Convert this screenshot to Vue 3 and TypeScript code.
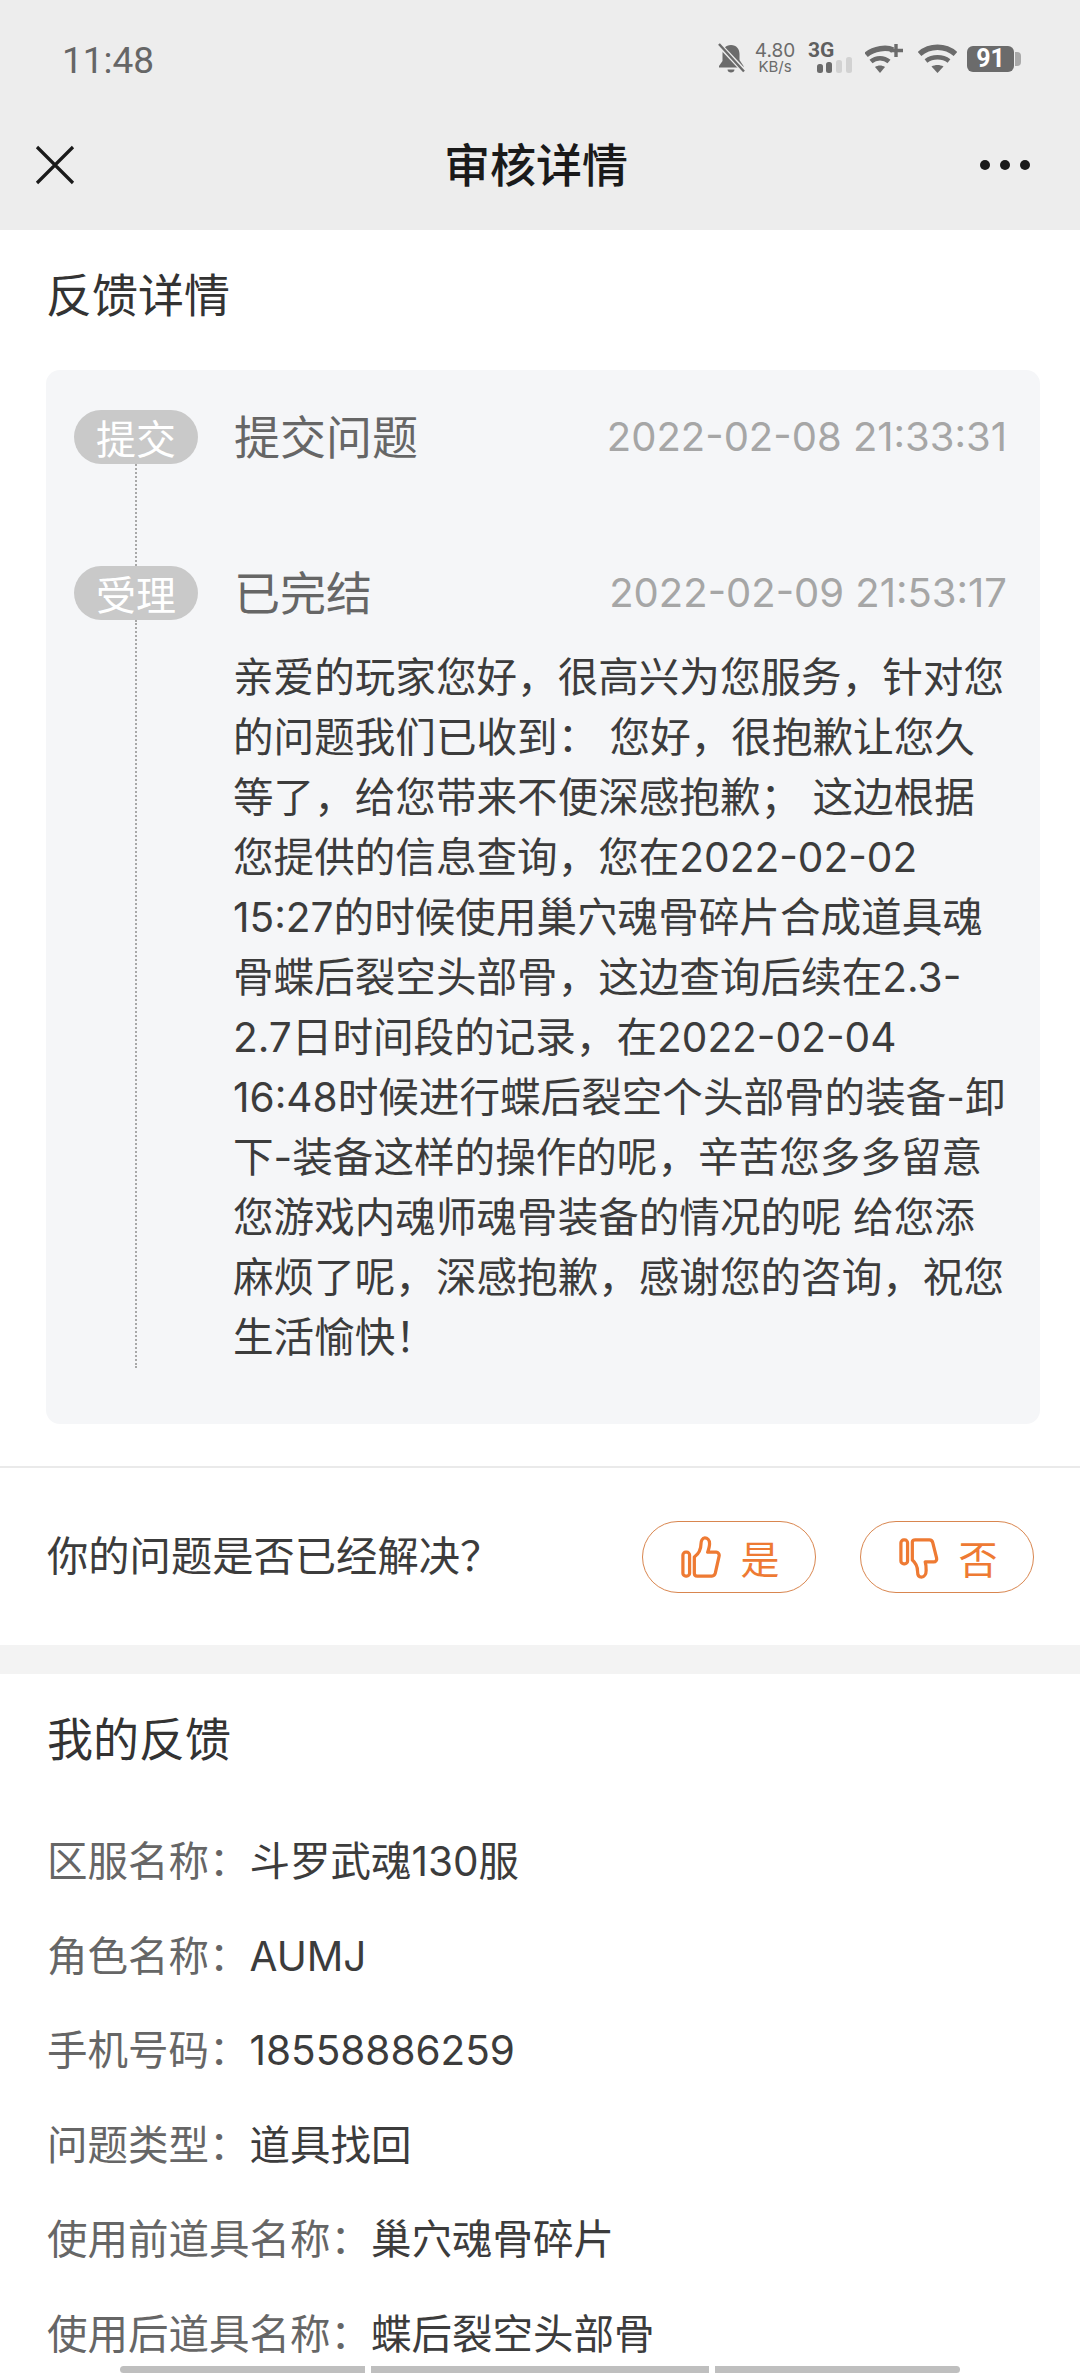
<script setup lang="ts">
const lines = [
  '亲爱的玩家您好，很高兴为您服务，针对您',
  '的问题我们已收到： 您好，很抱歉让您久',
  '等了，给您带来不便深感抱歉； 这边根据',
  '您提供的信息查询，您在2022-02-02',
  '15:27的时候使用巢穴魂骨碎片合成道具魂',
  '骨蝶后裂空头部骨，这边查询后续在2.3-',
  '2.7日时间段的记录，在2022-02-04',
  '16:48时候进行蝶后裂空个头部骨的装备-卸',
  '下-装备这样的操作的呢，辛苦您多多留意',
  '您游戏内魂师魂骨装备的情况的呢 给您添',
  '麻烦了呢，深感抱歉，感谢您的咨询，祝您',
  '生活愉快！',
]

const fields = [
  { label: '区服名称：', value: '斗罗武魂130服' },
  { label: '角色名称：', value: 'AUMJ' },
  { label: '手机号码：', value: '18558886259' },
  { label: '问题类型：', value: '道具找回' },
  { label: '使用前道具名称：', value: '巢穴魂骨碎片' },
  { label: '使用后道具名称：', value: '蝶后裂空头部骨' },
]
</script>

<template>
  <div class="page">
    <header class="top">
      <div class="status">
        <span class="clock">11:48</span>
        <div class="status-icons">
          <svg class="bell" width="29" height="30" viewBox="0 0 29 30">
            <path d="M14 2c5.500 0 8.500 4 8.500 9v6l4 6v1.500H2V23l3.500-5v-7C5.500 6 8.500 2 14 2z M10.500 26.500h7c0 2-1.500 3-3.500 3s-3.500-1-3.500-3z" fill="#6b6b6b" />
            <path d="M1 0.500L28 29" stroke="#ededed" stroke-width="5" />
            <path d="M2 1L27 28.500" stroke="#6b6b6b" stroke-width="2.400" />
          </svg>
          <div class="speed"><span>4.80</span><span class="unit">KB/s</span></div>
          <div class="net">
            <span class="g3">3G</span>
            <svg class="bars" width="36" height="16" viewBox="0 0 36 16">
              <rect x="0" y="7" width="6" height="9" rx="2.500" fill="#6b6b6b" />
              <rect x="9" y="5" width="6" height="11" rx="2.500" fill="#6b6b6b" />
              <rect x="19" y="3" width="6" height="13" rx="2.500" fill="#d2d2d2" />
              <rect x="29" y="0" width="6" height="16" rx="2.500" fill="#d2d2d2" />
            </svg>
          </div>
          <svg class="wifi-plus" width="38" height="29" viewBox="0 0 38 29">
            <path d="M1 11C9 4 22 3 28 6" fill="none" stroke="#6b6b6b" stroke-width="5.500" />
            <path d="M6 17.500c5-4.500 13-4.500 18 0" fill="none" stroke="#6b6b6b" stroke-width="4.500" />
            <path d="M15 29l-5-6c3-2 7-2 10 0z" fill="#6b6b6b" />
            <path d="M31 0v13M25 6.500h13" stroke="#6b6b6b" stroke-width="3.400" />
          </svg>
          <svg class="wifi" width="39" height="29" viewBox="0 0 39 29">
            <path d="M1.500 10c10-9 26-9 36 0" fill="none" stroke="#6b6b6b" stroke-width="5.500" />
            <path d="M8 17c6.500-5 16.500-5 23 0" fill="none" stroke="#6b6b6b" stroke-width="4.500" />
            <path d="M19.500 29l-6-6.500c3.500-2 8.500-2 12 0z" fill="#6b6b6b" />
          </svg>
          <div class="battery">
            <span class="level">91</span>
            <i class="cap"></i>
          </div>
        </div>
      </div>
      <div class="nav">
        <svg class="close" width="40" height="40" viewBox="0 0 40 40">
          <path d="M2 2L38 38M38 2L2 38" stroke="#1a1a1a" stroke-width="3.200" />
        </svg>
        <h1>审核详情</h1>
        <div class="more"><i></i><i></i><i></i></div>
      </div>
    </header>

    <section class="feedback">
      <h2>反馈详情</h2>
      <div class="card">
        <div class="step first">
          <span class="pill">提交</span>
          <div class="step-main">
            <div class="step-head">
              <span class="step-title">提交问题</span>
              <span class="date">2022-02-08 21:33:31</span>
            </div>
          </div>
        </div>
        <div class="step">
          <span class="pill">受理</span>
          <div class="step-main">
            <div class="step-head">
              <span class="step-title">已完结</span>
              <span class="date">2022-02-09 21:53:17</span>
            </div>
            <div class="reply">
              <div v-for="line in lines" :key="line" class="reply-line">{{ line }}</div>
            </div>
          </div>
        </div>
      </div>
    </section>

    <section class="solved">
      <span class="ask">你的问题是否已经解决？</span>
      <div class="votes">
        <button class="vote">
          <svg width="40" height="42" viewBox="0 0 42 44" fill="none" stroke="#ee7a33" stroke-width="3.400" stroke-linejoin="round">
            <rect x="2" y="17" width="7" height="25" rx="3" />
            <path d="M14 22c4-3 7-8 7-14 0-3 1.500-6 4-6s5 2 5 6c0 3-1 6-2 9h9c2 0 3.500 2 3 4l-4 18c-.5 2-2 3-3.500 3H17c-2 0-3-1.500-3-3z" />
          </svg>
          <span>是</span>
        </button>
        <button class="vote">
          <svg class="down" width="40" height="42" viewBox="0 0 42 44" fill="none" stroke="#ee7a33" stroke-width="3.400" stroke-linejoin="round">
            <rect x="2" y="2" width="7" height="25" rx="3" />
            <path d="M14 4c0-1.500 1-2 3-2h15c1.500 0 3 1 3.500 3l4 16c.5 2-1 4-3 4h-9c1 3 1 6 1 9 0 4-2 7-5 7s-4-3-4-6c0-6-2-9-5.500-12z" />
          </svg>
          <span>否</span>
        </button>
      </div>
    </section>

    <div class="band"></div>

    <section class="mine">
      <h2>我的反馈</h2>
      <div v-for="f in fields" :key="f.label" class="field">
        <span class="label">{{ f.label }}</span><span class="value">{{ f.value }}</span>
      </div>
    </section>

    <div class="scrollbar"><i class="s1"></i><i class="s2"></i><i class="s3"></i></div>
  </div>
</template>

<style scoped>
.page {
  position: relative;
  width: 1080px;
  height: 2376px;
  overflow: hidden;
  background: #fff;
  font-family: "Noto Sans CJK SC", "Liberation Sans", sans-serif;
}
.top {
  height: 230px;
  background: #ededed;
}
.status {
  height: 120px;
  display: flex;
  justify-content: space-between;
  padding: 43px 66px 0 62px;
  box-sizing: border-box;
}
.clock {
  font: 37px/36px Roboto, sans-serif;
  color: #666;
}
.status-icons {
  display: flex;
  align-items: flex-start;
  height: 32px;
}
.bell { margin: 0 9px 0 0; }
.speed {
  display: flex;
  flex-direction: column;
  align-items: center;
  width: 40px;
  font: 19px/16px Inter, sans-serif;
  color: #6b6b6b;
}
.speed .unit { font-size: 15px; line-height: 15px; }
.net {
  position: relative;
  width: 46px;
  height: 30px;
  margin-left: 13px;
}
.g3 {
  display: block;
  font: 700 21px/13px Roboto, sans-serif;
  color: #5f5f5f;
  padding-top: 1px;
}
.bars {
  position: absolute;
  left: 9px;
  top: 14px;
}
.wifi-plus { margin: 1px 0 0 11px; }
.wifi { margin: 1px 0 0 15px; }
.battery {
  position: relative;
  width: 47px;
  height: 26px;
  margin: 3px 0 0 10px;
  background: #6b6b6b;
  border-radius: 6px;
  text-align: center;
  color: #fff;
  font: 700 25px/26px Roboto, sans-serif;
}
.cap {
  position: absolute;
  right: -7px;
  top: 6px;
  width: 6px;
  height: 14px;
  border-radius: 0 4px 4px 0;
  background: #a9a9a9;
}
.nav {
  position: relative;
  height: 110px;
  display: flex;
  align-items: center;
  justify-content: space-between;
  padding: 0 50px 0 35px;
}
.nav h1 {
  position: absolute;
  left: 0;
  right: 8px;
  top: 12px;
  margin: 0;
  text-align: center;
  font-size: 46px;
  line-height: 60px;
  font-weight: 500;
  color: #1a1a1a;
}
.close { margin-top: -20px; }
.more {
  display: flex;
  gap: 10px;
  margin-top: -20px;
}
.more i {
  width: 10px;
  height: 10px;
  border-radius: 50%;
  background: #1a1a1a;
}
h2 {
  margin: 0;
  font-size: 46px;
  line-height: 60px;
  font-weight: 400;
  color: #333;
}
.feedback {
  padding: 32px 40px 0 46px;
  height: 1238px;
  box-sizing: border-box;
  border-bottom: 2px solid #eaeaea;
}
.card {
  margin-top: 48px;
  height: 1054px;
  padding: 40px 33px 0 28px;
  box-sizing: border-box;
  background: #f5f6f8;
  border-radius: 14px;
}
.step {
  position: relative;
  display: flex;
  align-items: flex-start;
}
.step.first { height: 156px; }
.step::before {
  content: "";
  position: absolute;
  left: 61px;
  top: 54px;
  bottom: -4px;
  border-left: 2px dotted #a8a8a8;
}
.step:not(.first)::before { bottom: auto; height: 748px; }
.pill {
  position: relative;
  flex: none;
  width: 124px;
  height: 54px;
  border-radius: 27px;
  background: #c9c9c9;
  color: #fff;
  font-size: 40px;
  line-height: 54px;
  text-align: center;
}
.step-main {
  flex: 1;
  margin-left: 36px;
}
.step-head {
  display: flex;
  align-items: center;
  justify-content: space-between;
  height: 54px;
}
.step-title {
  font-size: 46px;
  color: #666;
  line-height: 52px;
  margin-top: -6px;
}
.date {
  font: 40px/54px Inter, sans-serif;
  color: #a6a6a6;
}
.reply {
  margin-top: 28px;
  margin-left: -1px;
  font-family: Inter, "Noto Sans CJK SC", sans-serif;
  font-size: 40.600px;
  line-height: 60px;
  color: #3c3c3c;
  white-space: nowrap;
}
.solved {
  height: 177px;
  box-sizing: border-box;
  padding: 53px 46px 0 47px;
  display: flex;
  justify-content: space-between;
}
.ask {
  font-size: 41.300px;
  line-height: 65px;
  color: #3c3c3c;
}
.votes {
  display: flex;
  gap: 44px;
}
.vote {
  width: 174px;
  height: 72px;
  display: flex;
  align-items: center;
  justify-content: center;
  gap: 19px;
  padding: 0 0 0 3px;
  background: #fff;
  border: 1px solid #d9864f;
  border-radius: 36px;
  font-family: inherit;
  font-size: 39px;
  color: #ee7a33;
}
.down { margin-top: 4px; }
.band {
  height: 29px;
  background: #f3f3f3;
}
.mine {
  padding: 32px 0 0 47px;
}
.field {
  margin-top: 34.500px;
  height: 60px;
  font-family: Inter, "Noto Sans CJK SC", sans-serif;
  font-size: 40.500px;
  line-height: 60px;
  white-space: nowrap;
}
.mine h2 + .field { margin-top: 66px; }
.label { color: #666; }
.value { color: #3c3c3c; }
.scrollbar {
  position: absolute;
  left: 120px;
  top: 2366px;
  display: flex;
  gap: 6px;
}
.scrollbar i {
  height: 7px;
  background: #bfbfbf;
}
.s1 { width: 245px; border-radius: 4px 0 0 4px; }
.s2 { width: 338px; }
.s3 { width: 245px; border-radius: 0 4px 4px 0; }
</style>
